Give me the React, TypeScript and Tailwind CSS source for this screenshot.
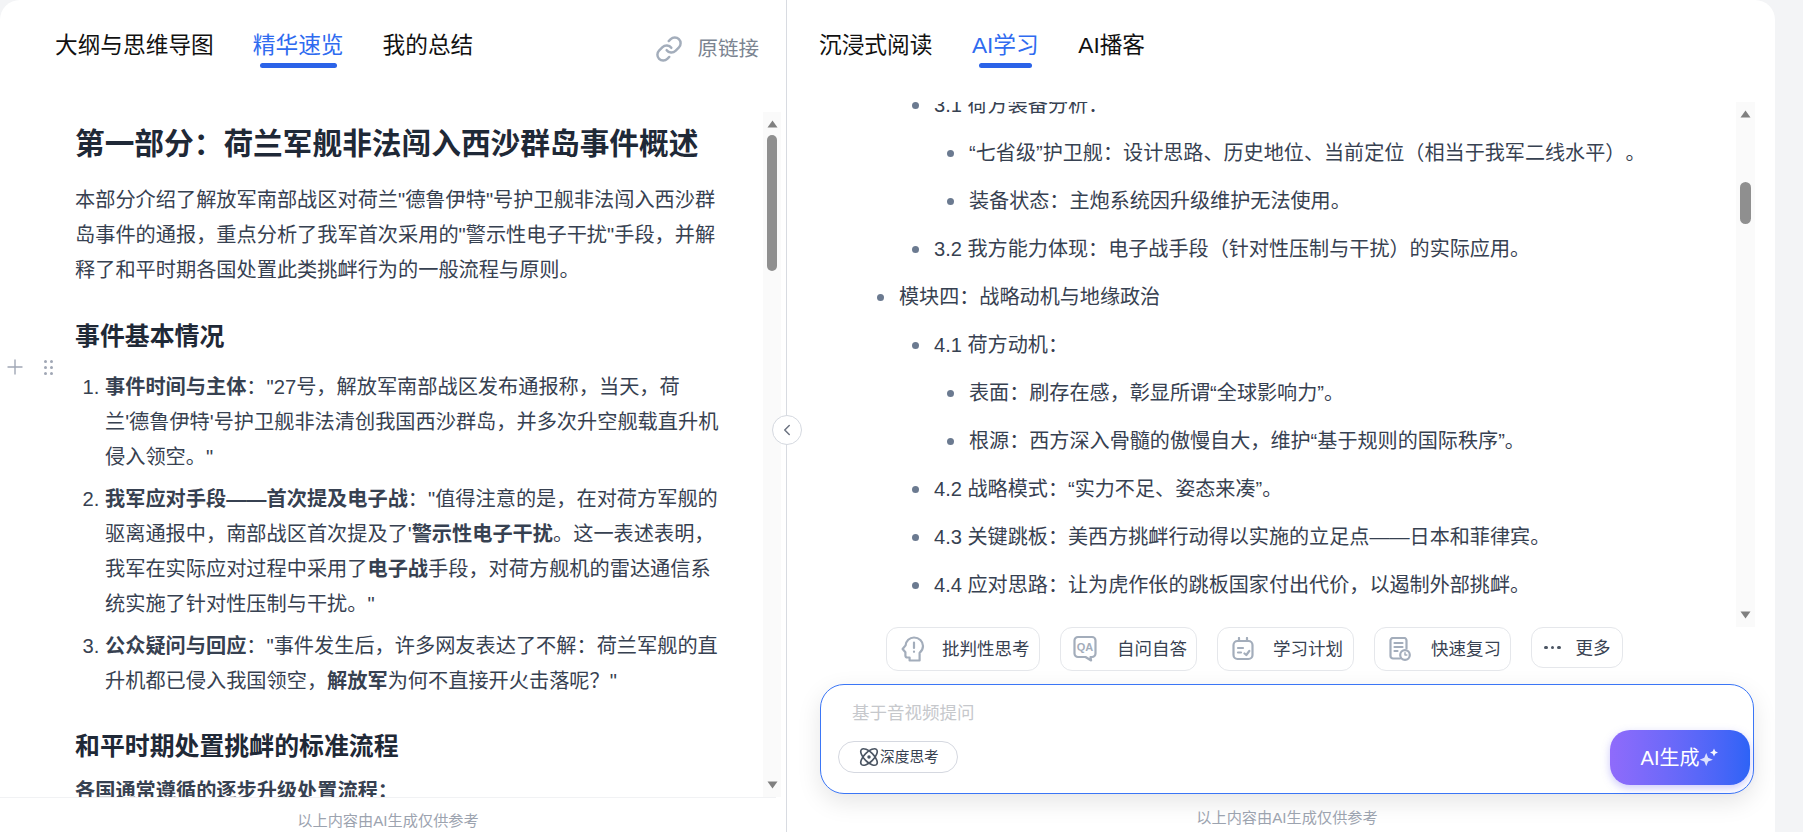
import { Atom, ChevronLeft, Link, Plus } from "lucide-react";

const body = "text-[20.1px] leading-[35.2px] text-[#374151]";
const bodyLeft = "text-[20.2px] leading-[35.2px] text-[#374151]";
const bullet =
  "relative mb-[12.8px] list-none before:absolute before:top-[14px] before:left-[-22px] before:h-[7px] before:w-[7px] before:rounded-full before:bg-[#6b7a90] before:content-['']";
const nested = "mt-[12.8px] pl-[35px]";

function Tab({ label, active, bar }: { label: string; active?: boolean; bar?: string }) {
  return (
    <div className="flex flex-col items-center">
      <span className={`text-[22.7px] leading-[30px] whitespace-nowrap ${active ? "text-[#2f6bf0]" : "text-[#111111]"}`}>{label}</span>
      {active && <span className={`mt-[3px] h-[5px] rounded-full bg-[#2b63e8] ${bar}`} />}
    </div>
  );
}

function Arrow({ down }: { down?: boolean }) {
  return (
    <svg width="11" height="8" viewBox="0 0 11 8" className={down ? "rotate-180" : ""}>
      <path d="M5.500 0.500 10.500 7.500H0.500Z" fill="#808080" />
    </svg>
  );
}

function HeadIcon() {
  return (
    <svg width="24" height="26" viewBox="0 0 24 26" fill="none" stroke="#a3adbb" strokeWidth="2.2" strokeLinejoin="round" strokeLinecap="round">
      <path d="M13 1.500c5 0 9 3.700 9 8.600 0 2.900-1.300 5-3.400 6.700v7.700H8.600v-3H6.400c-1.200 0-2-.9-2-2v-3.200L1.600 13l3-3.600C5 5 8.400 1.500 13 1.500Z" />
      <path d="M13 6.500v5.500M13 15.600v.2" />
    </svg>
  );
}

function QaIcon() {
  return (
    <svg width="24" height="28" viewBox="0 0 24 28" fill="none">
      <path d="M5 2h14a3.500 3.500 0 0 1 3.500 3.500v13a3.500 3.500 0 0 1-3.500 3.500h-1.500l.6 3.500-5.600-3.500H5a3.500 3.500 0 0 1-3.500-3.500v-13A3.500 3.500 0 0 1 5 2Z" stroke="#a3adbb" strokeWidth="2.2" strokeLinejoin="round" />
      <text x="12" y="16" textAnchor="middle" fontSize="11" fontWeight="700" fill="#a3adbb" fontFamily="Liberation Sans">QA</text>
    </svg>
  );
}

function PlanIcon() {
  return (
    <svg width="22" height="24" viewBox="0 0 22 24" fill="none" stroke="#a3adbb" strokeWidth="2.2" strokeLinecap="round" strokeLinejoin="round">
      <rect x="1.500" y="4" width="19" height="18" rx="4" />
      <path d="M7 1v3M15 1v3M6 11h5M6 15.500h3M12.500 16.500l1.800 1.500 3-4" />
    </svg>
  );
}

function ReviewIcon() {
  return (
    <svg width="22" height="24" viewBox="0 0 22 24" fill="none" stroke="#a3adbb" strokeWidth="2.2" strokeLinecap="round" strokeLinejoin="round">
      <path d="M11 21.500H4a2.500 2.500 0 0 1-2.500-2.500V3.500A2.500 2.500 0 0 1 4 1h11a2.500 2.500 0 0 1 2.500 2.500v8" />
      <path d="M5.500 6h8M5.500 10h8M5.500 14h3" />
      <circle cx="16" cy="18" r="4.800" />
      <path d="M16 15.800V18h1.800" strokeWidth="1.500" />
    </svg>
  );
}

function Sparkles() {
  return (
    <svg width="20" height="20" viewBox="0 0 18 18" fill="#ffffff">
      <path d="M6.500 4.500 8.200 8.800l4.300 1.700-4.300 1.700-1.700 4.300-1.700-4.300L.5 10.500l4.300-1.700Z" opacity="0.8" />
      <path d="M13.500 0.500 14.600 3l2.500 1.100-2.500 1.100-1.100 2.500-1.100-2.500-2.500-1.100 2.500-1.100Z" opacity="0.95" />
    </svg>
  );
}

function ActionButton({ icon, label, className }: { icon: React.ReactNode; label: string; className: string }) {
  return (
    <button className={`flex shrink-0 items-center rounded-[12px] border border-[#e5e7eb] bg-white ${className}`}>
      <span className="flex shrink-0 items-center justify-center">{icon}</span>
      <span className="text-[17.5px] leading-6 whitespace-nowrap text-[#374151]">{label}</span>
    </button>
  );
}

export default function App() {
  return (
    <div className="flex h-[832px] w-[1803px] overflow-hidden bg-[#f3f4f6] font-['Liberation_Sans','Noto_Sans_CJK_SC',sans-serif] [text-spacing-trim:space-all]">
      {/* 左侧 */}
      <div className="relative flex w-[787px] shrink-0 flex-col rounded-tl-[20px] border-r border-[#d8dbe1] bg-white">
        <div className="flex h-[112px] shrink-0 items-start pt-[30px] pr-[27px] pl-[55px]">
          <div className="flex gap-[39px]">
            <Tab label="大纲与思维导图" />
            <Tab label="精华速览" active bar="w-[77px]" />
            <Tab label="我的总结" />
          </div>
          <div className="ml-auto flex items-center gap-[15px] pt-[4px]">
            <Link size={28} strokeWidth={2.1} className="text-[#a3adbb]" />
            <span className="text-[20.5px] leading-[30px] text-[#7b8491]">原链接</span>
          </div>
        </div>

        <div className="flex min-h-0 flex-1">
          <div className="min-w-0 flex-1 overflow-hidden pt-[12px] pl-[75px]">
            <h1 className="text-[29.7px] leading-[40px] font-bold whitespace-nowrap text-[#1f2937]">第一部分：荷兰军舰非法闯入西沙群岛事件概述</h1>
            <p className={`mt-[19px] whitespace-nowrap ${bodyLeft}`}>
              本部分介绍了解放军南部战区对荷兰"德鲁伊特"号护卫舰非法闯入西沙群<br />
              岛事件的通报，重点分析了我军首次采用的"警示性电子干扰"手段，并解<br />
              释了和平时期各国处置此类挑衅行为的一般流程与原则。
            </p>
            <h2 className="mt-[30px] text-[24.9px] leading-[34px] font-bold text-[#1f2937]">事件基本情况</h2>
            <ol className={`mt-[17px] list-decimal pl-[30px] whitespace-nowrap ${bodyLeft}`}>
              <li className="mb-[6.500px]">
                <b>事件时间与主体</b>："27号，解放军南部战区发布通报称，当天，荷<br />
                兰'德鲁伊特'号护卫舰非法清创我国西沙群岛，并多次升空舰载直升机<br />
                侵入领空。"
              </li>
              <li className="mb-[6.500px]">
                <b>我军应对手段——首次提及电子战</b>："值得注意的是，在对荷方军舰的<br />
                驱离通报中，南部战区首次提及了'<b>警示性电子干扰</b>。这一表述表明，<br />
                我军在实际应对过程中采用了<b>电子战</b>手段，对荷方舰机的雷达通信系<br />
                统实施了针对性压制与干扰。"
              </li>
              <li>
                <b>公众疑问与回应</b>："事件发生后，许多网友表达了不解：荷兰军舰的直<br />
                升机都已侵入我国领空，<b>解放军</b>为何不直接开火击落呢？"
              </li>
            </ol>
            <h2 className="mt-[30px] text-[24.9px] leading-[34px] font-bold text-[#1f2937]">和平时期处置挑衅的标准流程</h2>
            <p className={`mt-[11px] font-bold ${bodyLeft}`}>各国通常遵循的逐步升级处置流程：</p>
          </div>
          <div className="mr-[5px] flex w-[18px] shrink-0 flex-col items-center bg-[#fafafa] pt-[8px] pb-[8px]">
            <Arrow />
            <div className="mt-[7px] h-[136px] w-[10px] rounded-full bg-[#8f8f8f]" />
            <div className="mt-auto">
              <Arrow down />
            </div>
          </div>
        </div>

        <div className="mr-[10px] h-[35px] shrink-0 border-t border-[#f1f2f4] pt-[13px] text-center text-[15.2px] leading-[20px] text-[#9ca3af]">
          以上内容由AI生成仅供参考
        </div>

        {/* 拖动手柄 */}
        <div className="absolute top-[355px] left-[3px] flex items-center gap-[17px]">
          <Plus size={24} strokeWidth={1.4} className="text-[#a0a7b5]" />
          <div className="grid grid-cols-2 gap-x-[3px] gap-y-[3px]">
            {[0, 1, 2, 3, 4, 5].map((i) => (
              <span key={i} className="h-[3px] w-[3px] rounded-full bg-[#a0a7b5]" />
            ))}
          </div>
        </div>

        <button className="absolute top-[415px] right-[-16px] z-10 flex h-[30px] w-[30px] items-center justify-center rounded-full border border-[#d5d9e0] bg-white">
          <ChevronLeft size={18} strokeWidth={2} className="text-[#6b7280]" />
        </button>
      </div>

      {/* 右侧 */}
      <div className="flex w-[988px] shrink-0 flex-col rounded-tr-[20px] bg-white">
        <div className="flex h-[102px] shrink-0 gap-[39.500px] pt-[30px] pl-[32px]">
          <Tab label="沉浸式阅读" />
          <Tab label="AI学习" active bar="w-[53px]" />
          <Tab label="AI播客" />
        </div>

        <div className="flex h-[525px] shrink-0">
          <div className="min-w-0 flex-1 overflow-hidden">
            <div className={`mt-[-14px] pl-[112px] whitespace-nowrap ${body}`}>
              <ul className="pl-[35px]">
                <li className={bullet}>
                  3.1 荷方装备分析：
                  <ul className={nested}>
                    <li className={bullet}>“七省级”护卫舰：设计思路、历史地位、当前定位（相当于我军二线水平）。</li>
                    <li className={bullet}>装备状态：主炮系统因升级维护无法使用。</li>
                  </ul>
                </li>
                <li className={bullet}>3.2 我方能力体现：电子战手段（针对性压制与干扰）的实际应用。</li>
              </ul>
              <ul>
                <li className={bullet}>
                  模块四：战略动机与地缘政治
                  <ul className={nested}>
                    <li className={bullet}>
                      4.1 荷方动机：
                      <ul className={nested}>
                        <li className={bullet}>表面：刷存在感，彰显所谓“全球影响力”。</li>
                        <li className={bullet}>根源：西方深入骨髓的傲慢自大，维护“基于规则的国际秩序”。</li>
                      </ul>
                    </li>
                    <li className={bullet}>4.2 战略模式：“实力不足、姿态来凑”。</li>
                    <li className={bullet}>4.3 关键跳板：美西方挑衅行动得以实施的立足点——日本和菲律宾。</li>
                    <li className={bullet}>4.4 应对思路：让为虎作伥的跳板国家付出代价，以遏制外部挑衅。</li>
                  </ul>
                </li>
              </ul>
            </div>
          </div>
          <div className="mr-[20px] flex w-[19px] shrink-0 flex-col items-center bg-[#fafafa] pt-[8px] pb-[8px]">
            <Arrow />
            <div className="mt-[64px] h-[42px] w-[11px] rounded-full bg-[#8f8f8f]" />
            <div className="mt-auto">
              <Arrow down />
            </div>
          </div>
        </div>

        <div className="flex shrink-0 items-start gap-[20px] pl-[99px]">
          <ActionButton icon={<HeadIcon />} label="批判性思考" className="h-[44px] w-[154px] gap-[17px] pl-[14px]" />
          <ActionButton icon={<QaIcon />} label="自问自答" className="h-[44px] w-[137px] gap-[20px] pl-[12px]" />
          <ActionButton icon={<PlanIcon />} label="学习计划" className="h-[44px] w-[137px] gap-[19px] pl-[14px]" />
          <ActionButton icon={<ReviewIcon />} label="快速复习" className="h-[44px] w-[137px] gap-[20px] pl-[14px]" />
          <ActionButton
            icon={
              <span className="flex gap-[3px]">
                <i className="h-[3.500px] w-[3.500px] rounded-full bg-[#4b5563]" />
                <i className="h-[3.500px] w-[3.500px] rounded-full bg-[#4b5563]" />
                <i className="h-[3.500px] w-[3.500px] rounded-full bg-[#4b5563]" />
              </span>
            }
            label="更多"
            className="h-[41px] w-[92px] gap-[15px] pl-[12px]"
          />
        </div>

        <div className="mt-[13px] ml-[33px] flex h-[110px] w-[934px] shrink-0 items-start justify-between rounded-[24px] border border-[#3b76f6] bg-white pr-[3px] shadow-[0_8px_24px_rgba(0,0,0,0.1)]">
          <div className="pt-[16px]">
            <div className="pl-[31px] text-[17.5px] leading-[24px] text-[#c6c8cc]">基于音视频提问</div>
            <div className="mt-[16px] ml-[17px] flex h-[32px] w-[120px] items-center rounded-full border border-[#d5d8e0] pl-[19px]">
              <Atom size={22} strokeWidth={1.8} className="text-[#4b5563]" />
              <span className="text-[14.7px] leading-5 whitespace-nowrap text-[#374151]">深度思考</span>
            </div>
          </div>
          <button className="mt-[45px] flex h-[55px] w-[140px] items-center justify-center rounded-[20px] bg-gradient-to-r from-[#8f6bfb] to-[#2d63f6] shadow-[0_3px_8px_rgba(110,100,240,0.35)]">
            <span className="text-[20px] leading-6 text-white">AI生成</span>
            <Sparkles />
          </button>
        </div>

        <div className="ml-[33px] w-[934px] pt-[14px] text-center text-[15.2px] leading-[20px] text-[#9ca3af]">以上内容由AI生成仅供参考</div>
      </div>
    </div>
  );
}
